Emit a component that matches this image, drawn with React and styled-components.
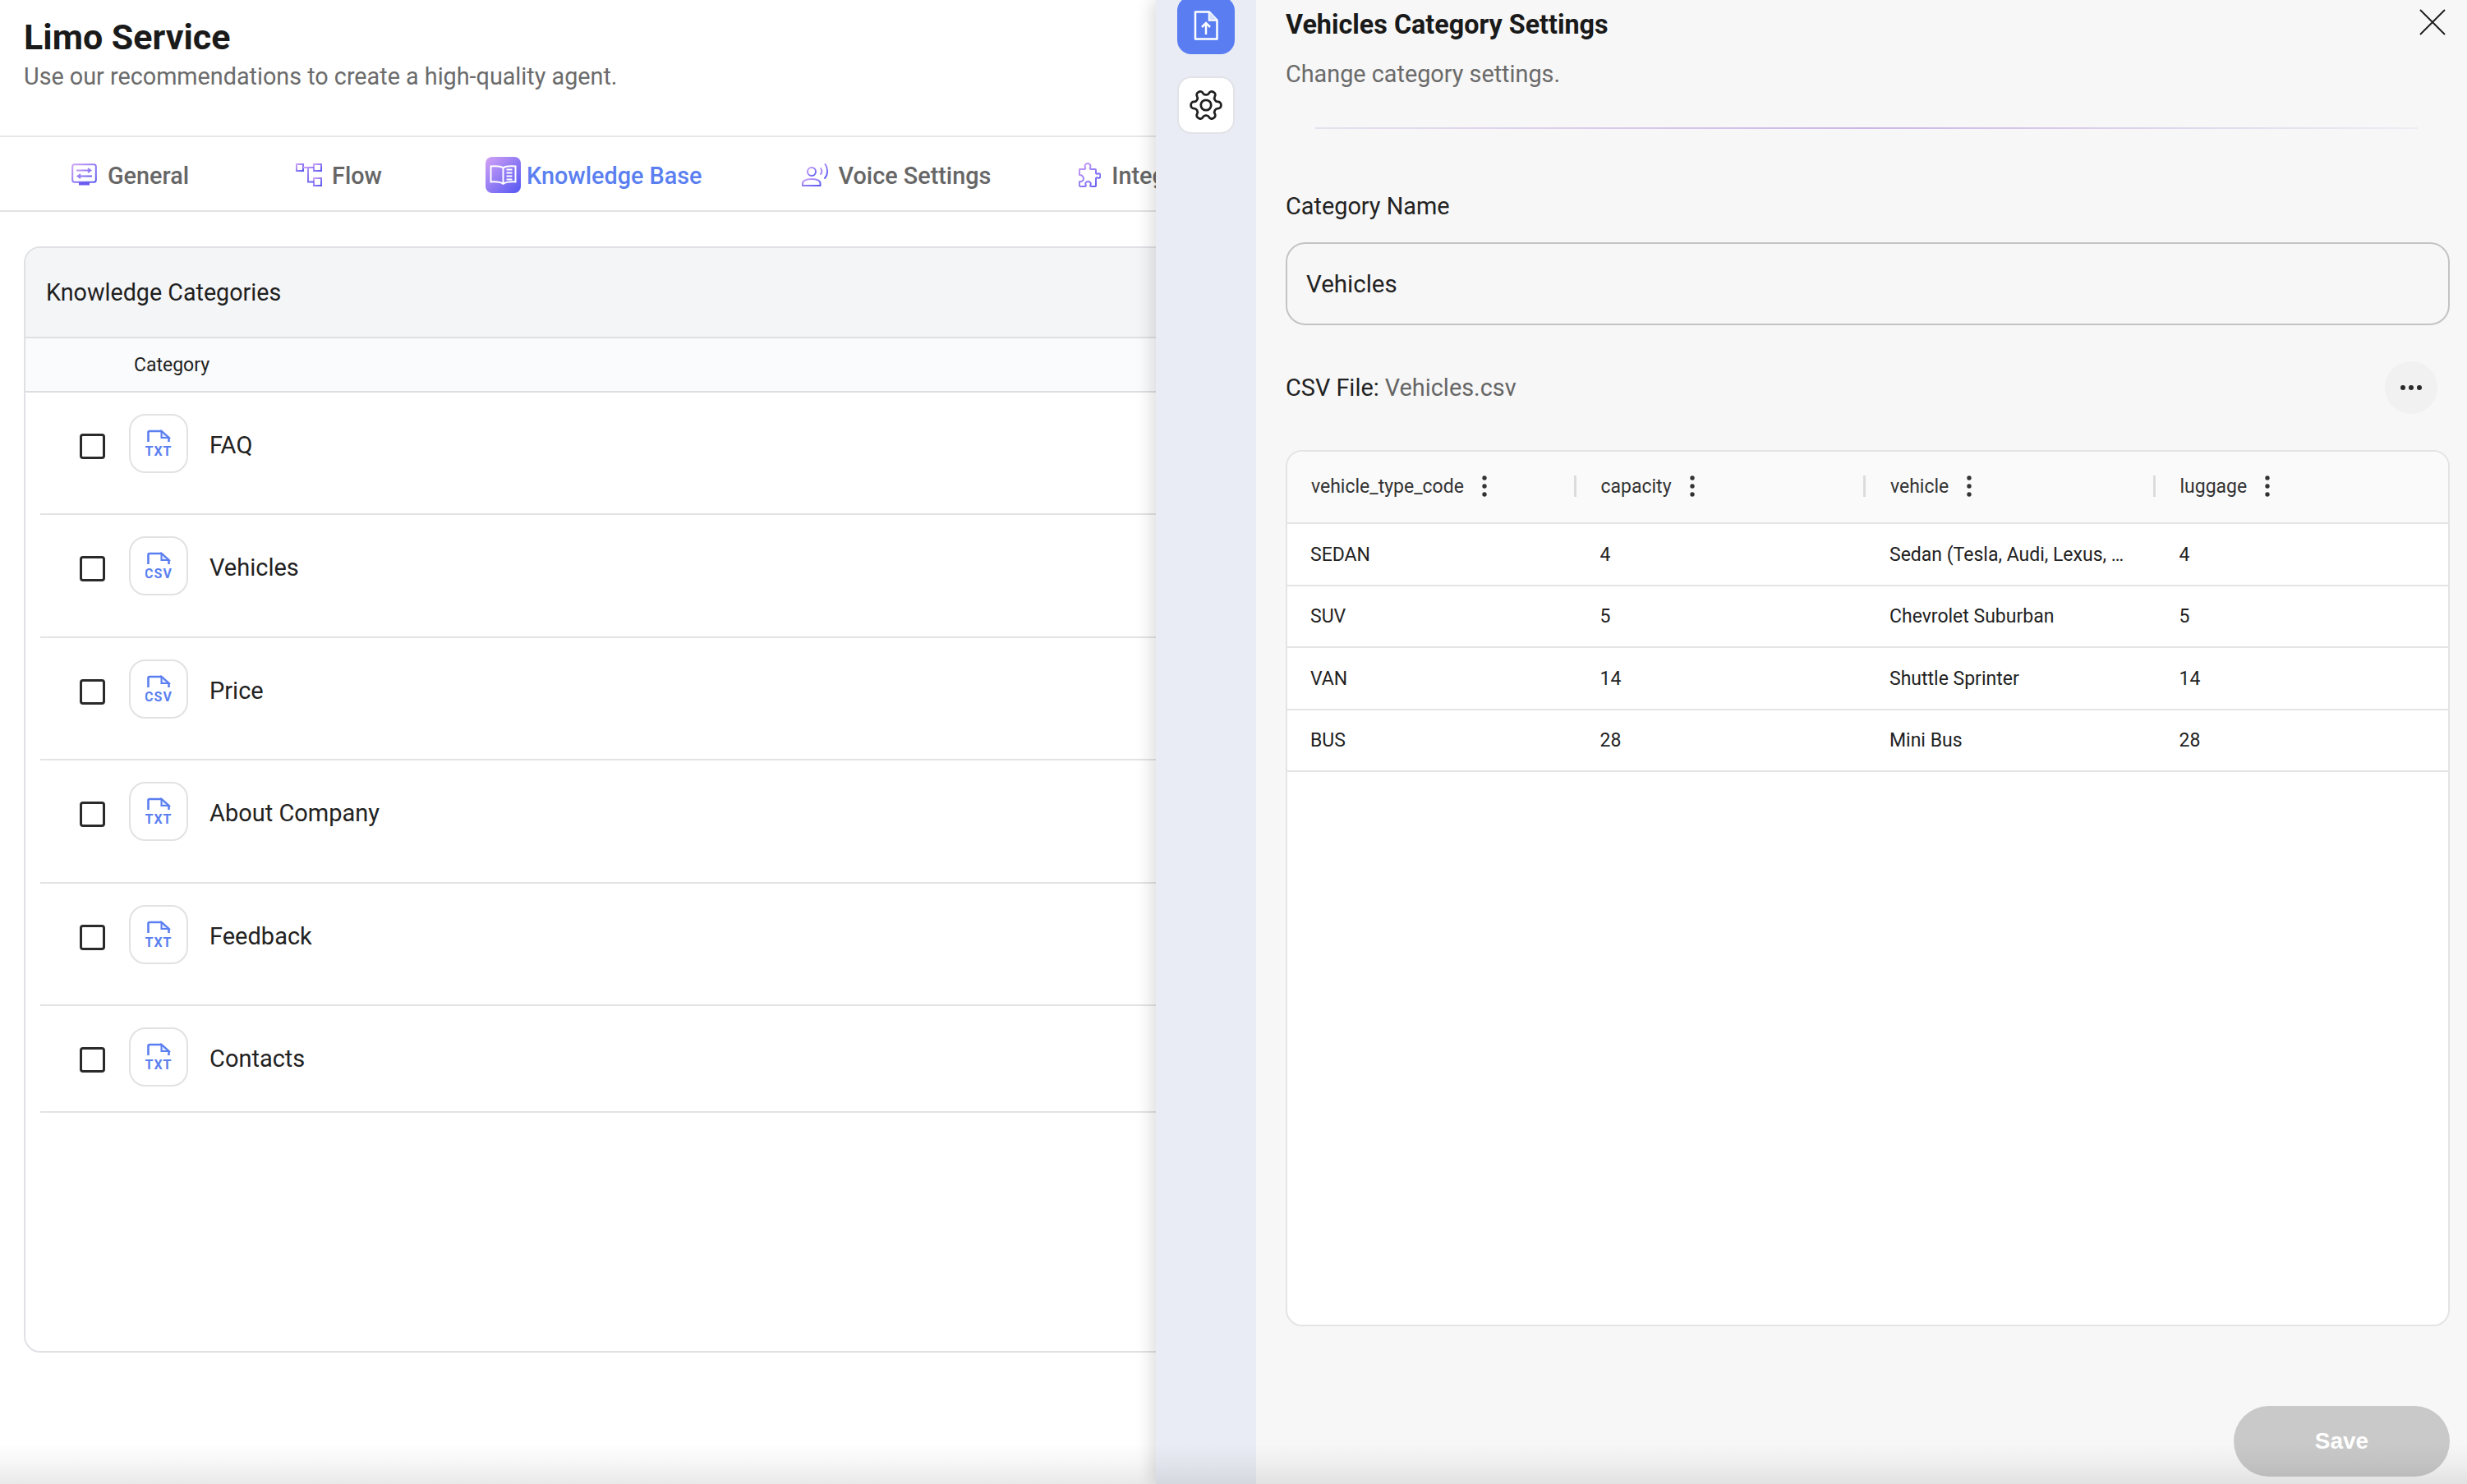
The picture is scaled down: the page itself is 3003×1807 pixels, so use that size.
import React from 'react';
import styled, { createGlobalStyle } from 'styled-components';

const Global = createGlobalStyle`
  html, body { margin: 0; padding: 0; background: #fff; }
  body { font-family: Roboto, "Liberation Sans", sans-serif; color: #1f1f1f; }
  * { box-sizing: border-box; }
`;

const Page = styled.div`
  position: relative;
  display: flex;
  width: 3003px;
  height: 1807px;
  overflow: hidden;
  background: #fff;
`;
const Main = styled.main`
  flex: none;
  width: 1407px;
  overflow: hidden;
`;
const Header = styled.header`
  height: 167px;
  padding: 20px 0 0 29px;
  border-bottom: 2px solid #e6e6e8;
`;
const Title = styled.h1`
  margin: 0;
  font-size: 43px;
  line-height: 50px;
  font-weight: 700;
  color: #1a1a1a;
`;
const Subtitle = styled.p`
  margin: 5px 0 0;
  font-size: 28.75px;
  line-height: 36px;
  color: #6b6b6b;
`;
const Tabs = styled.nav`
  display: flex;
  align-items: center;
  height: 91px;
  padding-top: 5px;
  border-bottom: 2px solid #e2e2e5;
  white-space: nowrap;
`;
const Tab = styled.div`
  flex: none;
  display: flex;
  align-items: center;
  gap: 7px;
  margin-left: ${p => p.$lead}px;
  font-size: 28.8px;
  font-weight: 500;
  color: ${p => (p.$active ? '#5b7ff0' : '#666')};
`;
const TabIcon = styled.span`
  flex: none;
  display: flex;
  align-items: center;
  justify-content: center;
  width: 43px;
  height: 44px;
  margin-top: -2px;
`;
const Card = styled.section`
  width: 1400px;
  height: 1347px;
  margin: 42px 0 0 29px;
  border: 2px solid #e0e1e4;
  border-radius: 20px;
  overflow: hidden;
`;
const CardHead = styled.div`
  display: flex;
  align-items: center;
  height: 110px;
  padding-left: 25px;
  background: #f4f5f7;
  border-bottom: 2px solid #dfe0e3;
  font-size: 28.7px;
`;
const ColumnHead = styled.div`
  display: flex;
  align-items: center;
  height: 66px;
  padding-left: 132px;
  background: #fafbfc;
  border-bottom: 2px solid #dcdee2;
  font-size: 23px;
`;
const Row = styled.div`
  display: flex;
  align-items: flex-start;
  gap: 26px;
  height: ${p => (p.$last ? 130 : 149.4)}px;
  margin-left: 18px;
  padding: 26px 0 0 48px;
  border-bottom: 2px solid #e3e3e6;
`;
const Check = styled.span`
  flex: none;
  width: 31px;
  height: 31px;
  margin: 24px 3px 0 0;
  border: 3px solid #2a2a2a;
  border-radius: 4px;
`;
const FileBox = styled.span`
  flex: none;
  display: flex;
  align-items: center;
  justify-content: center;
  width: 72px;
  height: 72px;
  border: 2px solid #e2e2e4;
  border-radius: 20px;
  background: #fff;
`;
const RowName = styled.span`
  font-size: 29px;
  line-height: 76px;
  color: #222;
`;

const Panel = styled.aside`
  position: relative;
  z-index: 2;
  flex: 1;
  min-width: 0;
  display: flex;
  box-shadow: -6px 0 18px rgba(0, 0, 0, 0.13);
`;
const Rail = styled.div`
  flex: none;
  display: flex;
  flex-direction: column;
  align-items: center;
  gap: 27px;
  width: 122px;
  margin-top: -4px;
  background: #e9ecf4;
`;
const RailButton = styled.button`
  display: flex;
  align-items: center;
  justify-content: center;
  width: 70px;
  height: 70px;
  padding: 0;
  border: ${p => (p.$active ? 'none' : '2px solid #e2e3e8')};
  border-radius: 17px;
  background: ${p => (p.$active ? '#5a7ef2' : '#fff')};
`;
const Body = styled.div`
  flex: 1;
  min-width: 0;
  display: flex;
  flex-direction: column;
  padding: 0 21px 9px 36px;
  background: #f7f7f7;
`;
const PanelHead = styled.div`
  display: flex;
  justify-content: space-between;
  align-items: flex-start;
  height: 155px;
`;
const PanelTitle = styled.h2`
  margin: 11px 0 0;
  font-size: 32.300px;
  line-height: 38px;
  font-weight: 700;
  color: #1a1a1a;
`;
const PanelSub = styled.p`
  margin: 23px 0 0;
  font-size: 28.8px;
  line-height: 36px;
  color: #6a6a6a;
`;
const Close = styled.span`
  display: flex;
  margin: 11px 5px 0 0;
`;
const Divider = styled.div`
  height: 2px;
  margin: 0 39px 0 36px;
  background: linear-gradient(90deg, #e7e1ef 0%, #d7c9ea 30%, #cdb7e6 50%, #ddd4ec 75%, #efedf3 100%);
`;
const Label = styled.label`
  display: block;
  margin-top: 76px;
  font-size: 28.85px;
  line-height: 36px;
  color: #222;
`;
const Field = styled.div`
  display: flex;
  align-items: center;
  height: 101px;
  margin-top: 26px;
  padding-left: 23px;
  border: 2px solid #c4c4c4;
  border-radius: 24px;
  font-size: 29.5px;
  color: #222;
`;
const FileRow = styled.div`
  display: flex;
  align-items: center;
  justify-content: space-between;
  height: 64px;
  margin-top: 44px;
  padding-right: 15px;
  font-size: 28.85px;
  color: #222;
`;
const Muted = styled.span`
  color: #666;
`;
const RoundButton = styled.span`
  display: flex;
  align-items: center;
  justify-content: center;
  width: 64px;
  height: 64px;
  border-radius: 50%;
  background: #f1f1f1;
`;
const TableCard = styled.div`
  flex: none;
  height: 1067px;
  margin-top: 44px;
  background: #fff;
  border: 2px solid #e4e4e4;
  border-radius: 20px;
  overflow: hidden;
`;
const Grid = styled.div`
  display: grid;
  grid-template-columns: repeat(3, 352.5px) 1fr;
  align-items: center;
  height: ${p => p.$h}px;
  padding-left: 29px;
  background: ${p => p.$bg || '#fff'};
  border-bottom: 2px solid #e4e4e4;
  font-size: 23px;
  color: #222;
`;
const HeadCell = styled.div`
  position: relative;
  display: flex;
  align-items: center;
  gap: 22px;
  margin-top: -2px;
  color: #333;
`;
const ColumnRule = styled.span`
  position: absolute;
  left: -33px;
  width: 3px;
  height: 26px;
  background: #dcdcdc;
`;
const Cell = styled.div`
  max-width: 290px;
  margin: 1px 0 0 -1px;
  overflow: hidden;
  white-space: nowrap;
  text-overflow: ellipsis;
`;
const Footer = styled.div`
  display: flex;
  justify-content: flex-end;
  margin-top: auto;
`;
const Save = styled.button`
  width: 263px;
  height: 86px;
  border: none;
  border-radius: 43px;
  background: #c9c9c9;
  color: #fff;
  font: 700 28px "Liberation Sans", sans-serif;
`;
const BottomFade = styled.div`
  position: absolute;
  left: 0;
  right: 0;
  bottom: 0;
  z-index: 3;
  height: 50px;
  pointer-events: none;
  background: linear-gradient(180deg, rgba(0, 0, 0, 0), rgba(0, 0, 0, 0.035) 50%, rgba(0, 0, 0, 0.085));
`;
const HiddenDefs = styled.svg`
  position: absolute;
  width: 0;
  height: 0;
`;

const G = 'url(#tabGrad)';

const GeneralIcon = () => (
  <svg width="31" height="28" viewBox="0 0 31 28" fill="none">
    <rect x="1.2" y="1.2" width="28.6" height="21.6" rx="2.5" stroke={G} strokeWidth="2" />
    <path d="M9 23h13v3.5H9z" fill="#6a5cf0" />
    <path d="M6 8.500h17M20 6l3.500 2.500L20 11M25 15.500H8M11 13l-3.500 2.500L11 18" stroke={G} strokeWidth="1.800" />
  </svg>
);
const FlowIcon = () => (
  <svg width="32" height="28" viewBox="0 0 32 28" fill="none" stroke={G} strokeWidth="2">
    <rect x="1" y="1" width="8" height="8" />
    <rect x="22" y="1" width="9" height="8" />
    <rect x="22" y="18" width="9" height="9" />
    <path d="M9 5h13M15 5v17.500h7" />
  </svg>
);
const BookIcon = () => (
  <svg width="43" height="44" viewBox="0 0 43 44" fill="none">
    <rect width="43" height="44" rx="8" fill="url(#bookGrad)" />
    <path d="M21.500 13.500c-3-2.300-8-2.600-15-2v19c6-.4 11-.2 15 2.300 4-2.500 9-2.700 15-2.300v-19c-7-.6-12-.3-15 2zM21.500 13.500v19" stroke="#fff" strokeWidth="2" />
    <path d="M25.500 15.500h7M25.500 19.500h7M25.500 23.500h7M25.500 27.500h7" stroke="#fff" strokeWidth="2" />
  </svg>
);
const VoiceIcon = () => (
  <svg width="33" height="28" viewBox="0 0 33 28" fill="none" stroke={G} strokeWidth="2">
    <circle cx="12" cy="10" r="5" />
    <path d="M1 27v-2.500C1 21 5 19 12 19s10.500 2 10.500 5.500V27z" />
    <path d="M23 6c1.500 2 1.500 5 0 7M28.500 1c3.500 4.500 3.500 12.500-.5 17" strokeLinecap="round" />
  </svg>
);
const PuzzleIcon = () => (
  <svg width="30" height="30" viewBox="0 0 30 30" fill="none" stroke={G} strokeWidth="2" strokeLinejoin="round">
    <path d="M4 8h6c1 0 1.500-1 1-2-1.200-2.500.5-5 3-5s4.200 2.500 3 5c-.5 1 0 2 1 2h5a1 1 0 0 1 1 1v3.500c0 1 1 1.500 2 1 2.200-1 3.500.5 3.500 2.500s-1.300 3.500-3.500 2.500c-1-.5-2 0-2 1V28a1 1 0 0 1-1 1h-4.500c-1.500 0-1.500-1-1-2 .8-2-.5-4-3-4s-3.800 2-3 4c.5 1 .5 2-1 2H5a1 1 0 0 1-1-1v-5c1.500.5 5-.4 5-3.500S5.500 14.500 4 15z" />
  </svg>
);
const FileTypeIcon = ({ label }) => (
  <svg width="32" height="34" viewBox="0 0 32 34" fill="none">
    <path d="M3.500 15V3.500A1.500 1.500 0 0 1 5 2h14.500l9 8v5" stroke="#5b7ff0" strokeWidth="2.600" />
    <path d="M19.500 2l9 8h-9z" fill="#e2e9fd" stroke="#5b7ff0" strokeWidth="2" />
    <text x="16" y="32" textAnchor="middle" fontFamily="Roboto, sans-serif" fontSize="16" fontWeight="700" letterSpacing="1" fill="#5b7ff0">{label}</text>
  </svg>
);
const UploadIcon = () => (
  <svg width="30" height="36" viewBox="0 0 30 36" fill="none" stroke="#fff" strokeWidth="2.500">
    <path d="M2 1.500h17l9.500 10V34.500H2z" strokeLinejoin="round" />
    <path d="M19 1.500v10h9.500" />
    <path d="M19.500 2.500l8 8h-8z" fill="#d6dffb" stroke="none" />
    <path d="M15 29V15.500M10 20l5-5 5 5" />
  </svg>
);
const GearIcon = () => (
  <svg width="44" height="44" viewBox="0 0 24 24" fill="none" stroke="#1f1f1f" strokeWidth="1.500" strokeLinejoin="round">
    <g transform="rotate(90 12 12)">
      <path d="M12.220 2h-.44a2 2 0 0 0-2 2v.180a2 2 0 0 1-1 1.730l-.430.250a2 2 0 0 1-2 0l-.150-.080a2 2 0 0 0-2.730.730l-.220.380a2 2 0 0 0 .730 2.730l.150.100a2 2 0 0 1 1 1.720v.510a2 2 0 0 1-1 1.740l-.150.090a2 2 0 0 0-.730 2.730l.220.380a2 2 0 0 0 2.730.730l.150-.080a2 2 0 0 1 2 0l.430.250a2 2 0 0 1 1 1.730V20a2 2 0 0 0 2 2h.440a2 2 0 0 0 2-2v-.180a2 2 0 0 1 1-1.730l.430-.250a2 2 0 0 1 2 0l.150.080a2 2 0 0 0 2.730-.730l.220-.390a2 2 0 0 0-.730-2.730l-.150-.080a2 2 0 0 1-1-1.740v-.500a2 2 0 0 1 1-1.740l.150-.090a2 2 0 0 0 .730-2.730l-.220-.380a2 2 0 0 0-2.730-.730l-.150.080a2 2 0 0 1-2 0l-.430-.250a2 2 0 0 1-1-1.730V4a2 2 0 0 0-2-2z" />
      <circle cx="12" cy="12" r="3.400" />
    </g>
  </svg>
);
const CloseIcon = () => (
  <svg width="32" height="32" viewBox="0 0 32 32" stroke="#1a1a1a" strokeWidth="1.800">
    <path d="M1 1l30 30M31 1L1 31" />
  </svg>
);
const DotsH = () => (
  <svg width="28" height="8" viewBox="0 0 28 8" fill="#2a2a2a">
    <circle cx="4" cy="4" r="3" />
    <circle cx="14" cy="4" r="3" />
    <circle cx="24" cy="4" r="3" />
  </svg>
);
const DotsV = () => (
  <svg width="6" height="26" viewBox="0 0 6 26" fill="#333">
    <circle cx="3" cy="3" r="2.700" />
    <circle cx="3" cy="13" r="2.700" />
    <circle cx="3" cy="23" r="2.700" />
  </svg>
);

const tabs = [
  { name: 'General', lead: 81, icon: <GeneralIcon /> },
  { name: 'Flow', lead: 124, icon: <FlowIcon /> },
  { name: 'Knowledge Base', lead: 126, icon: <BookIcon />, active: true },
  { name: 'Voice Settings', lead: 116, icon: <VoiceIcon /> },
  { name: 'Integrations', lead: 97, icon: <PuzzleIcon /> },
];
const categories = [
  ['FAQ', 'TXT'],
  ['Vehicles', 'CSV'],
  ['Price', 'CSV'],
  ['About Company', 'TXT'],
  ['Feedback', 'TXT'],
  ['Contacts', 'TXT'],
];
const columns = ['vehicle_type_code', 'capacity', 'vehicle', 'luggage'];
const rows = [
  ['SEDAN', '4', 'Sedan (Tesla, Audi, Lexus, Mercedes)', '4'],
  ['SUV', '5', 'Chevrolet Suburban', '5'],
  ['VAN', '14', 'Shuttle Sprinter', '14'],
  ['BUS', '28', 'Mini Bus', '28'],
];

export default function App() {
  return (
    <Page>
      <Global />
      <HiddenDefs>
        <defs>
          <linearGradient id="tabGrad" x1="0" y1="0" x2="1" y2="1">
            <stop offset="0" stopColor="#cfa2f6" />
            <stop offset="1" stopColor="#5a5af0" />
          </linearGradient>
          <linearGradient id="bookGrad" x1="0" y1="0" x2="1" y2="1">
            <stop offset="0" stopColor="#d3a2f5" />
            <stop offset="1" stopColor="#5356f3" />
          </linearGradient>
        </defs>
      </HiddenDefs>
      <Main>
        <Header>
          <Title>Limo Service</Title>
          <Subtitle>Use our recommendations to create a high-quality agent.</Subtitle>
        </Header>
        <Tabs>
          {tabs.map(t => (
            <Tab key={t.name} $lead={t.lead} $active={t.active}>
              <TabIcon>{t.icon}</TabIcon>
              {t.name}
            </Tab>
          ))}
        </Tabs>
        <Card>
          <CardHead>Knowledge Categories</CardHead>
          <ColumnHead>Category</ColumnHead>
          {categories.map(([name, type], i) => (
            <Row key={name} $last={i === categories.length - 1}>
              <Check />
              <FileBox><FileTypeIcon label={type} /></FileBox>
              <RowName>{name}</RowName>
            </Row>
          ))}
        </Card>
      </Main>
      <Panel>
        <Rail>
          <RailButton $active><UploadIcon /></RailButton>
          <RailButton><GearIcon /></RailButton>
        </Rail>
        <Body>
          <PanelHead>
            <div>
              <PanelTitle>Vehicles Category Settings</PanelTitle>
              <PanelSub>Change category settings.</PanelSub>
            </div>
            <Close><CloseIcon /></Close>
          </PanelHead>
          <Divider />
          <Label>Category Name</Label>
          <Field>Vehicles</Field>
          <FileRow>
            <span>CSV File: <Muted>Vehicles.csv</Muted></span>
            <RoundButton><DotsH /></RoundButton>
          </FileRow>
          <TableCard>
            <Grid $h={88} $bg="#fafafa">
              {columns.map((c, i) => (
                <HeadCell key={c}>
                  {i > 0 && <ColumnRule />}
                  {c}
                  <DotsV />
                </HeadCell>
              ))}
            </Grid>
            {rows.map(r => (
              <Grid key={r[0]} $h={75.500}>
                {r.map((v, i) => <Cell key={i}>{v}</Cell>)}
              </Grid>
            ))}
          </TableCard>
          <Footer><Save>Save</Save></Footer>
        </Body>
      </Panel>
      <BottomFade />
    </Page>
  );
}
